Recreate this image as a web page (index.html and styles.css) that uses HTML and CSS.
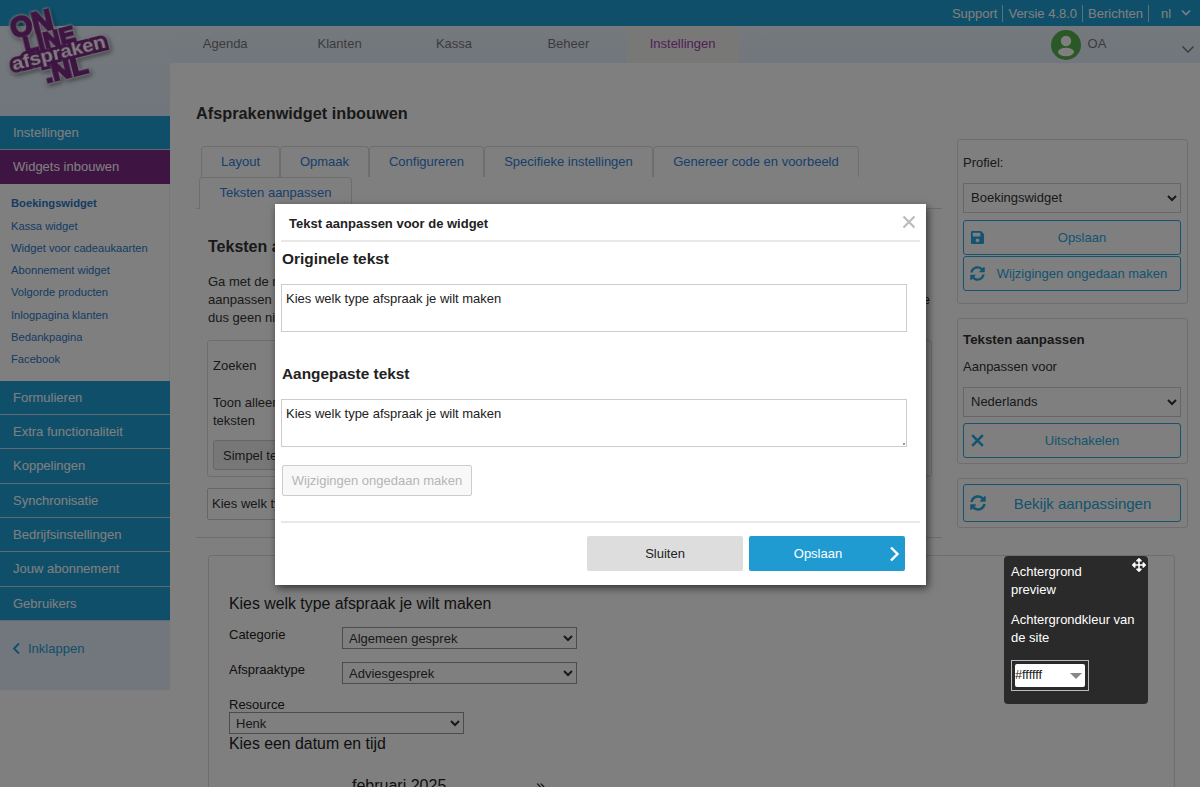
FILE: index.html
```html
<!DOCTYPE html>
<html lang="nl">
<head>
  <meta charset="UTF-8">
  <title>Afsprakenwidget inbouwen</title>
  <link rel="stylesheet" href="styles.css">
</head>
<body>

<svg class="defs" width="0" height="0">
  <symbol id="i-save" viewBox="0 0 448 512"><path d="M433.941 129.941l-83.882-83.882A48 48 0 0 0 316.118 32H48C21.49 32 0 53.49 0 80v352c0 26.51 21.49 48 48 48h352c26.51 0 48-21.49 48-48V163.882a48 48 0 0 0-14.059-33.941zM224 416c-35.346 0-64-28.654-64-64 0-35.346 28.654-64 64-64s64 28.654 64 64c0 35.346-28.654 64-64 64zm96-304.52V212c0 6.627-5.373 12-12 12H76c-6.627 0-12-5.373-12-12V108c0-6.627 5.373-12 12-12h228.52c3.183 0 6.235 1.264 8.485 3.515l3.48 3.48A11.996 11.996 0 0 1 320 111.48z"/></symbol>
  <symbol id="i-sync" viewBox="0 0 512 512"><path d="M370.72 133.28C339.458 104.008 298.888 87.962 255.848 88c-77.458.068-144.328 53.178-162.791 126.85-1.344 5.363-6.122 9.15-11.651 9.15H24.103c-7.498 0-13.194-6.807-11.807-14.176C33.933 94.924 134.813 8 256 8c66.448 0 126.791 26.136 171.315 68.685L463.03 40.97C478.149 25.851 504 36.559 504 57.941V192c0 13.255-10.745 24-24 24H345.941c-21.382 0-32.09-25.851-16.971-40.971l41.75-41.749zM32 296h134.059c21.382 0 32.09 25.851 16.971 40.971l-41.75 41.75c31.262 29.273 71.835 45.319 114.876 45.28 77.418-.07 144.315-53.144 162.787-126.849 1.344-5.363 6.122-9.15 11.651-9.15h57.304c7.498 0 13.194 6.807 11.807 14.176C478.067 417.076 377.187 504 256 504c-66.448 0-126.791-26.136-171.315-68.685L48.97 471.03C33.851 486.149 8 475.441 8 454.059V320c0-13.255 10.745-24 24-24z"/></symbol>
</svg>

<div class="topbar">
  <a>Support</a><a>Versie 4.8.0</a><a>Berichten</a>
  <span class="lang">nl</span>
  <svg class="chev-small" width="12" height="8" viewBox="0 0 12 8"><path d="M2 1.5l4 4 4-4" fill="none" stroke="currentColor" stroke-width="1.6"/></svg>
</div>

<div class="shell">
  <aside class="sidebar">
    <div class="side-top"></div>
    <a class="side-item">Instellingen</a>
    <a class="side-item purple">Widgets inbouwen</a>
    <div class="sub-list">
      <a class="current">Boekingswidget</a>
      <a>Kassa widget</a>
      <a>Widget voor cadeaukaarten</a>
      <a>Abonnement widget</a>
      <a>Volgorde producten</a>
      <a>Inlogpagina klanten</a>
      <a>Bedankpagina</a>
      <a>Facebook</a>
    </div>
    <a class="side-item">Formulieren</a>
    <a class="side-item">Extra functionaliteit</a>
    <a class="side-item">Koppelingen</a>
    <a class="side-item">Synchronisatie</a>
    <a class="side-item">Bedrijfsinstellingen</a>
    <a class="side-item">Jouw abonnement</a>
    <a class="side-item">Gebruikers</a>
    <div class="collapse">
      <svg width="9" height="13" viewBox="0 0 9 13"><path d="M7 1.5l-5 5 5 5" fill="none" stroke="currentColor" stroke-width="1.8"/></svg>
      Inklappen
    </div>
  </aside>

  <div class="right">
    <nav class="nav">
      <a>Agenda</a><a>Klanten</a><a>Kassa</a><a>Beheer</a><a class="active">Instellingen</a>
      <div class="user">
        <svg width="30" height="30" viewBox="0 0 30 30"><circle cx="15" cy="15" r="15" fill="#56b04e"/><circle cx="15" cy="11" r="5.2" fill="#fff"/><ellipse cx="15" cy="22" rx="8" ry="4.2" fill="#fff"/></svg>
        <span class="user-name">OA</span>
        <svg class="user-chev" width="14" height="9" viewBox="0 0 14 9"><path d="M1.5 1.5l5.5 5.5 5.5-5.5" fill="none" stroke="currentColor" stroke-width="1.5"/></svg>
      </div>
    </nav>

    <div class="content">
      <div class="columns">
        <main class="main-col">
          <h1>Afsprakenwidget inbouwen</h1>
          <div class="tabs">
            <a class="tab w1">Layout</a><a class="tab w2">Opmaak</a><a class="tab w3">Configureren</a><a class="tab w4">Specifieke instellingen</a><a class="tab w5">Genereer code en voorbeeld</a>
            <a class="tab tab-on">Teksten aanpassen</a>
          </div>
          <div class="tab-body">
            <h2>Teksten aanpassen</h2>
            <p class="intro">Ga met de muis over de tekst die je wilt wijzigen en klik erop om deze te kunnen<br>aanpassen die je wilt wijzigen. De aanpassingen worden alleen voor deze widget gebruikt en gelden voor de gekozen taal, de<br>dus geen nieuwe vertaling.</p>
            <div class="search-box">
              <div class="search-label">Zoeken</div>
              <div class="search-text">Toon alleen aangepaste<br>teksten</div>
              <button class="simple">Simpel tekstoverzicht</button>
            </div>
            <div class="text-row">Kies welk type afspraak je wilt maken</div>
          </div>
        </main>

        <div class="side-col">
          <section class="panel first">
            <label class="panel-label">Profiel:</label>
            <select class="panel-select"><option>Boekingswidget</option></select>
            <button class="line-btn"><svg class="ic"><use href="#i-save"/></svg><span>Opslaan</span></button>
            <button class="line-btn"><svg class="ic"><use href="#i-sync"/></svg><span>Wijzigingen ongedaan maken</span></button>
          </section>
          <section class="panel second">
            <h3>Teksten aanpassen</h3>
            <label class="panel-label">Aanpassen voor</label>
            <select class="panel-select"><option>Nederlands</option></select>
            <button class="line-btn"><svg class="ic" viewBox="0 0 14 14"><path d="M2 2l10 10M12 2L2 12" fill="none" stroke="currentColor" stroke-width="2.4"/></svg><span>Uitschakelen</span></button>
          </section>
          <section class="panel last">
            <button class="line-btn big"><svg class="ic"><use href="#i-sync"/></svg><span>Bekijk aanpassingen</span></button>
          </section>
        </div>
      </div>

      <section class="preview">
        <div class="preview-title">Kies welk type afspraak je wilt maken</div>
        <div class="field"><label>Categorie</label><select><option>Algemeen gesprek</option></select></div>
        <div class="field"><label>Afspraaktype</label><select><option>Adviesgesprek</option></select></div>
        <div class="resource-label">Resource</div>
        <select class="resource"><option>Henk</option></select>
        <div class="date-title">Kies een datum en tijd</div>
        <div class="month"><span>februari 2025</span><span>»</span></div>
      </section>
    </div>
  </div>
</div>

<svg class="logo" width="130" height="100" viewBox="0 0 130 100">
  <g class="logo-text" transform="rotate(-14 58 46)">
    <text x="16" y="28" font-size="30" textLength="43" lengthAdjust="spacingAndGlyphs">ON</text>
    <text x="25" y="45" font-size="22" textLength="52" lengthAdjust="spacingAndGlyphs">LINE</text>
    <text x="38" y="79" font-size="24" textLength="44" lengthAdjust="spacingAndGlyphs">.NL</text>
    <text class="band" x="9" y="59" font-size="18" textLength="96" lengthAdjust="spacingAndGlyphs">afspraken</text>
  </g>
</svg>

<div class="overlay"></div>

<div class="modal">
  <div class="modal-head">
    <span class="modal-title">Tekst aanpassen voor de widget</span>
    <svg class="modal-close" width="14" height="14" viewBox="0 0 14 14"><path d="M1.5 1.5l11 11M12.5 1.5l-11 11" fill="none" stroke="currentColor" stroke-width="2.2"/></svg>
  </div>
  <div class="modal-body">
    <h4>Originele tekst</h4>
    <textarea class="locked" readonly>Kies welk type afspraak je wilt maken</textarea>
    <h4 class="second">Aangepaste tekst</h4>
    <textarea>Kies welk type afspraak je wilt maken</textarea>
    <button class="undo">Wijzigingen ongedaan maken</button>
  </div>
  <div class="modal-foot">
    <button class="btn-close">Sluiten</button>
    <button class="btn-save">Opslaan
      <svg width="11" height="16" viewBox="0 0 11 16"><path d="M2 1.5l6.5 6.5L2 14.5" fill="none" stroke="#fff" stroke-width="2.4"/></svg>
    </button>
  </div>
</div>

<div class="color-panel">
  <svg class="move" width="14" height="14" viewBox="0 0 512 512"><path d="M352.201 425.775l-79.196 79.196c-9.373 9.373-24.568 9.373-33.941 0l-79.196-79.196c-15.119-15.119-4.411-40.971 16.971-40.97h51.162L228 284H127.196v51.162c0 21.382-25.851 32.09-40.971 16.971L7.029 272.937c-9.373-9.373-9.373-24.569 0-33.941L86.225 159.8c15.119-15.119 40.971-4.411 40.971 16.971V228H228V127.196h-51.23c-21.382 0-32.09-25.851-16.971-40.971l79.196-79.196c9.373-9.373 24.568-9.373 33.941 0l79.196 79.196c15.119 15.119 4.411 40.971-16.971 40.971h-51.162V228h100.804v-51.162c0-21.382 25.851-32.09 40.97-16.971l79.196 79.196c9.373 9.373 9.373 24.569 0 33.941L425.773 352.2c-15.119 15.119-40.971 4.411-40.97-16.971V284H284v100.804h51.23c21.382 0 32.09 25.851 16.971 40.971z" fill="#fff"/></svg>
  <div class="color-title">Achtergrond<br>preview</div>
  <div class="color-label">Achtergrondkleur van de site</div>
  <div class="color-frame">
    <div class="color-box">#ffffff<i class="tri"></i></div>
  </div>
</div>

</body>
</html>
```

FILE: styles.css
```css
* {
  box-sizing: border-box;
}
body {
  margin: 0;
  height: 787px;
  overflow: hidden;
  font-family: "Liberation Sans", Arial, sans-serif;
  font-size: 13px;
  color: #333;
  background: #fff;
}
.defs {
  position: absolute;
}
select, button, textarea {
  font-family: "Liberation Sans", Arial, sans-serif;
}

/* header */
.topbar {
  height: 26px;
  background: #1f9fd4;
  color: #fff;
  display: flex;
  justify-content: flex-end;
  align-items: center;
  padding-right: 8px;
  font-size: 13px;
}
.topbar a {
  padding: 0 5px;
  line-height: 17px;
  border-right: 1px solid #c8dfe8;
}
.lang {
  margin-left: 12px;
  width: 13px;
}
.chev-small {
  margin-left: 6px;
}
.shell {
  display: flex;
  height: 761px;
}
.sidebar {
  width: 170px;
  flex: none;
  height: 664px;
  background: #e4eefa;
}
.side-top {
  height: 89.7px;
  background: linear-gradient(#eaf3fc, #e2ecf8);
}
.side-item {
  display: block;
  height: 34.3px;
  line-height: 33px;
  padding-left: 13px;
  background: #1f9fd4;
  color: #fff;
  border-bottom: 1px solid #bcd8e4;
}
.side-item.purple {
  background: #7c2a85;
  border-bottom: 0;
}
.sub-list {
  background: #fff;
  height: 196.6px;
  padding-top: 8px;
  border-right: 1px solid #eee;
}
.sub-list a {
  display: block;
  height: 22.3px;
  line-height: 22px;
  padding-left: 11px;
  font-size: 11.2px;
  color: #2a78c8;
}
.sub-list a.current {
  font-weight: bold;
}
.collapse {
  padding: 20px 0 0 12px;
  color: #1f9fd4;
  display: flex;
  align-items: center;
  gap: 7px;
}

.right {
  flex: 1;
  min-width: 0;
}
.nav {
  height: 37px;
  background: linear-gradient(#eaf3fc, #e4eefa);
  display: flex;
  align-items: stretch;
  color: #777;
}
.nav > a {
  width: 114.4px;
  text-align: center;
  line-height: 36px;
  flex: none;
}
.nav > a:first-child {
  margin-left: -2px;
}
.nav > a.active {
  background: #f0f0ec;
  color: #a040b0;
  width: 112px;
  margin-left: 1px;
}
.user {
  margin-left: 312px;
  display: flex;
  align-items: flex-start;
  padding-top: 4px;
}
.user-name {
  margin: 6px 0 0 7px;
  width: 93px;
}
.user-chev {
  margin-top: 15px;
}

/* content */
.content {
  height: 724px;
  overflow: hidden;
}
.columns {
  display: flex;
  padding-left: 26px;
  height: 474px;
}
.main-col {
  width: 746px;
}
h1 {
  margin: 41px 0 0;
  font-size: 16.3px;
  line-height: 18px;
  color: #333;
}
.tabs {
  margin-top: 24px;
  padding-left: 5px;
  height: 63px;
  font-size: 13px;
  border-bottom: 1px solid #ddd;
  display: flex;
  flex-wrap: wrap;
  align-content: flex-start;
}
.tab {
  height: 31px;
  line-height: 30px;
  text-align: center;
  color: #3080d8;
  border: 1px solid #ddd;
  border-bottom: 0;
  border-radius: 4px 4px 0 0;
  flex: none;
}
.w1 { width: 79px; }
.w2 { width: 89px; }
.w3 { width: 115px; }
.w4 { width: 169px; }
.w5 { width: 206px; margin-right: 80px; }
.tab-on {
  width: 153px;
  height: 32px;
  margin-left: -2px;
  background: #fff;
}
.tab-body {
  padding: 0 10px 17px 11px;
  border-bottom: 1px solid #ddd;
}
h2 {
  margin: 29px 0 0 1px;
  font-size: 16px;
  line-height: 18px;
}
.intro {
  margin: 17px 0 0 1px;
  line-height: 18px;
  white-space: nowrap;
}
.search-box {
  margin-top: 13px;
  height: 137px;
  border: 1px solid #ddd;
  border-radius: 3px;
  padding: 16px 5px;
}
.search-label {
  line-height: 18px;
}
.search-text {
  margin-top: 19px;
  line-height: 18px;
}
.simple {
  margin-top: 10px;
  height: 30px;
  width: 160px;
  font-size: 13px;
  text-align: left;
  padding-left: 9px;
  color: #333;
  background: #eee;
  border: 1px solid #ccc;
  border-radius: 3px;
}
.text-row {
  margin-top: 11px;
  height: 32px;
  width: 300px;
  line-height: 30px;
  padding-left: 4px;
  border: 1px solid #ccc;
  border-radius: 2px;
}

.side-col {
  width: 231px;
  margin-left: 15px;
  padding-top: 76px;
}
.panel {
  border: 1px solid #ddd;
  border-radius: 3px;
  padding: 0 6px 5px 5px;
  margin-bottom: 14px;
}
.panel.first {
  height: 165px;
  padding-top: 14px;
}
.panel.second {
  height: 146px;
}
.panel.last {
  padding-top: 5px;
  height: 50px;
}
.panel-label {
  display: block;
  line-height: 18px;
}
h3 {
  margin: 12px 0 0;
  font-size: 13.3px;
  line-height: 18px;
}
h3 + .panel-label {
  margin-top: 9px;
}
.panel-select {
  display: block;
  width: 100%;
  height: 30px;
  margin: 11px 0 7px;
  padding: 0 0 2px 3px;
  font-size: 13px;
  color: #333;
  background: #fff;
  border: 1px solid #ccc;
}
.second .panel-select {
  margin-bottom: 6px;
}
.line-btn {
  display: flex;
  align-items: center;
  width: 100%;
  height: 35px;
  margin-bottom: 1px;
  padding: 0 6px;
  font-size: 13px;
  color: #28a8e0;
  background: #fff;
  border: 1px solid #28a8e0;
  border-radius: 3px;
}
.line-btn span {
  flex: 1;
  text-align: center;
}
.line-btn.big {
  height: 38px;
  font-size: 15px;
}
.ic {
  width: 15px;
  height: 15px;
  fill: currentColor;
  margin-right: 5px;
  flex: none;
}
.big .ic {
  width: 16px;
  height: 16px;
}

/* preview under the tabs */
.preview {
  margin: 18px 25px 0 38px;
  height: 300px;
  border: 1px solid #ddd;
  border-radius: 3px;
  padding: 38px 20px 0;
  color: #222;
}
.preview-title, .date-title {
  font-size: 15.85px;
  line-height: 20px;
}
.field {
  display: flex;
  align-items: flex-start;
  margin-top: 14px;
  height: 21px;
}
.preview-title + .field {
  margin-top: 13px;
}
.field label {
  width: 113px;
  line-height: 16px;
}
.field select {
  width: 235px;
}
.field select, .resource {
  height: 22px;
  padding-left: 2px;
  font-size: 13px;
  color: #333;
  background: #fff;
  border: 1px solid #999;
}
.resource-label {
  margin-top: 14px;
  line-height: 15px;
}
.resource {
  display: block;
  width: 235px;
}
.month {
  margin: 23px 0 0 123px;
  width: 193px;
  display: flex;
  justify-content: space-between;
  font-size: 16px;
  line-height: 18px;
}

/* logo */
.logo {
  position: absolute;
  left: 0;
  top: 0;
  overflow: visible;
}
.logo-text {
  filter: drop-shadow(0 0 1px #fff) drop-shadow(0 0 1px #fff) drop-shadow(1px 2px 2px rgba(0, 0, 0, 0.5));
}
.logo-text text {
  font-family: "Liberation Sans", Arial, sans-serif;
  font-weight: bold;
  fill: #7c2a85;
  stroke: #7c2a85;
  stroke-width: 2px;
}
.logo-text text.band {
  fill: #fff;
  stroke-width: 6px;
  paint-order: stroke;
}

/* dim layer and modal */
.overlay {
  position: absolute;
  left: 0;
  top: 0;
  right: 0;
  bottom: 0;
  background: rgba(0, 0, 0, 0.5);
}
.modal {
  position: absolute;
  left: 275px;
  top: 204px;
  width: 651px;
  height: 381px;
  background: #fff;
  box-shadow: 2px 3px 8px rgba(0, 0, 0, 0.6);
  padding: 0 6px;
  color: #222;
}
.modal-head {
  height: 38px;
  display: flex;
  justify-content: space-between;
  align-items: center;
  padding: 3px 4px 0 8px;
  border-bottom: 2px solid #e8e8e8;
}
.modal-title {
  font-weight: bold;
  font-size: 13px;
}
.modal-close {
  color: #bbb;
  margin-top: -4px;
}
.modal-body {
  padding-bottom: 25px;
  border-bottom: 2px solid #e8e8e8;
}
h4 {
  margin: 8px 0 0;
  font-size: 15.4px;
  line-height: 18px;
  padding-left: 1px;
}
h4.second {
  margin-top: 33px;
}
.modal-body textarea {
  display: block;
  width: 626px;
  height: 48px;
  margin-top: 16px;
  padding: 6px 4px;
  font-size: 13px;
  line-height: 15px;
  color: #222;
  border: 1px solid #ccc;
  outline: 0;
}
.modal-body textarea::-webkit-resizer {
  background: linear-gradient(#999, #999) no-repeat 12px 12px / 2px 2px;
}
textarea.locked {
  resize: none;
}
.undo {
  display: block;
  margin: 18px 0 0 1px;
  width: 190px;
  height: 31px;
  font-size: 13px;
  color: #b5b5b5;
  background: #f8f8f8;
  border: 1px solid #ccc;
  border-radius: 2px;
}
.modal-foot {
  display: flex;
  gap: 6px;
  padding: 13px 0 0 306px;
}
.modal-foot button {
  width: 156px;
  height: 35px;
  font-size: 13px;
  border: 0;
  border-radius: 2px;
}
.btn-close {
  background: #ddd;
  color: #222;
}
.btn-save {
  position: relative;
  padding-right: 24px;
  background: #1f9bd1;
  color: #fff;
}
.btn-save svg {
  position: absolute;
  right: 5px;
  top: 10px;
}

/* floating colour panel stays above the dim layer */
.color-panel {
  position: absolute;
  left: 1004px;
  top: 556px;
  width: 144px;
  height: 148px;
  padding: 7px 7px;
  background: #2a2a2a;
  border-radius: 4px;
  color: #fff;
  line-height: 18px;
}
.move {
  position: absolute;
  right: 2px;
  top: 2px;
}
.color-label {
  margin-top: 12px;
}
.color-frame {
  margin-top: 13px;
  width: 78px;
  height: 31px;
  padding: 3px;
  border: 1px solid #bbb;
}
.color-box {
  position: relative;
  height: 23px;
  line-height: 23px;
  background: #fff;
  color: #222;
  font-size: 12.7px;
  border-radius: 2px;
}
.tri {
  position: absolute;
  right: 3px;
  top: 9px;
  border: 6px solid transparent;
  border-top: 6px solid #888;
  border-bottom: 0;
}
```
